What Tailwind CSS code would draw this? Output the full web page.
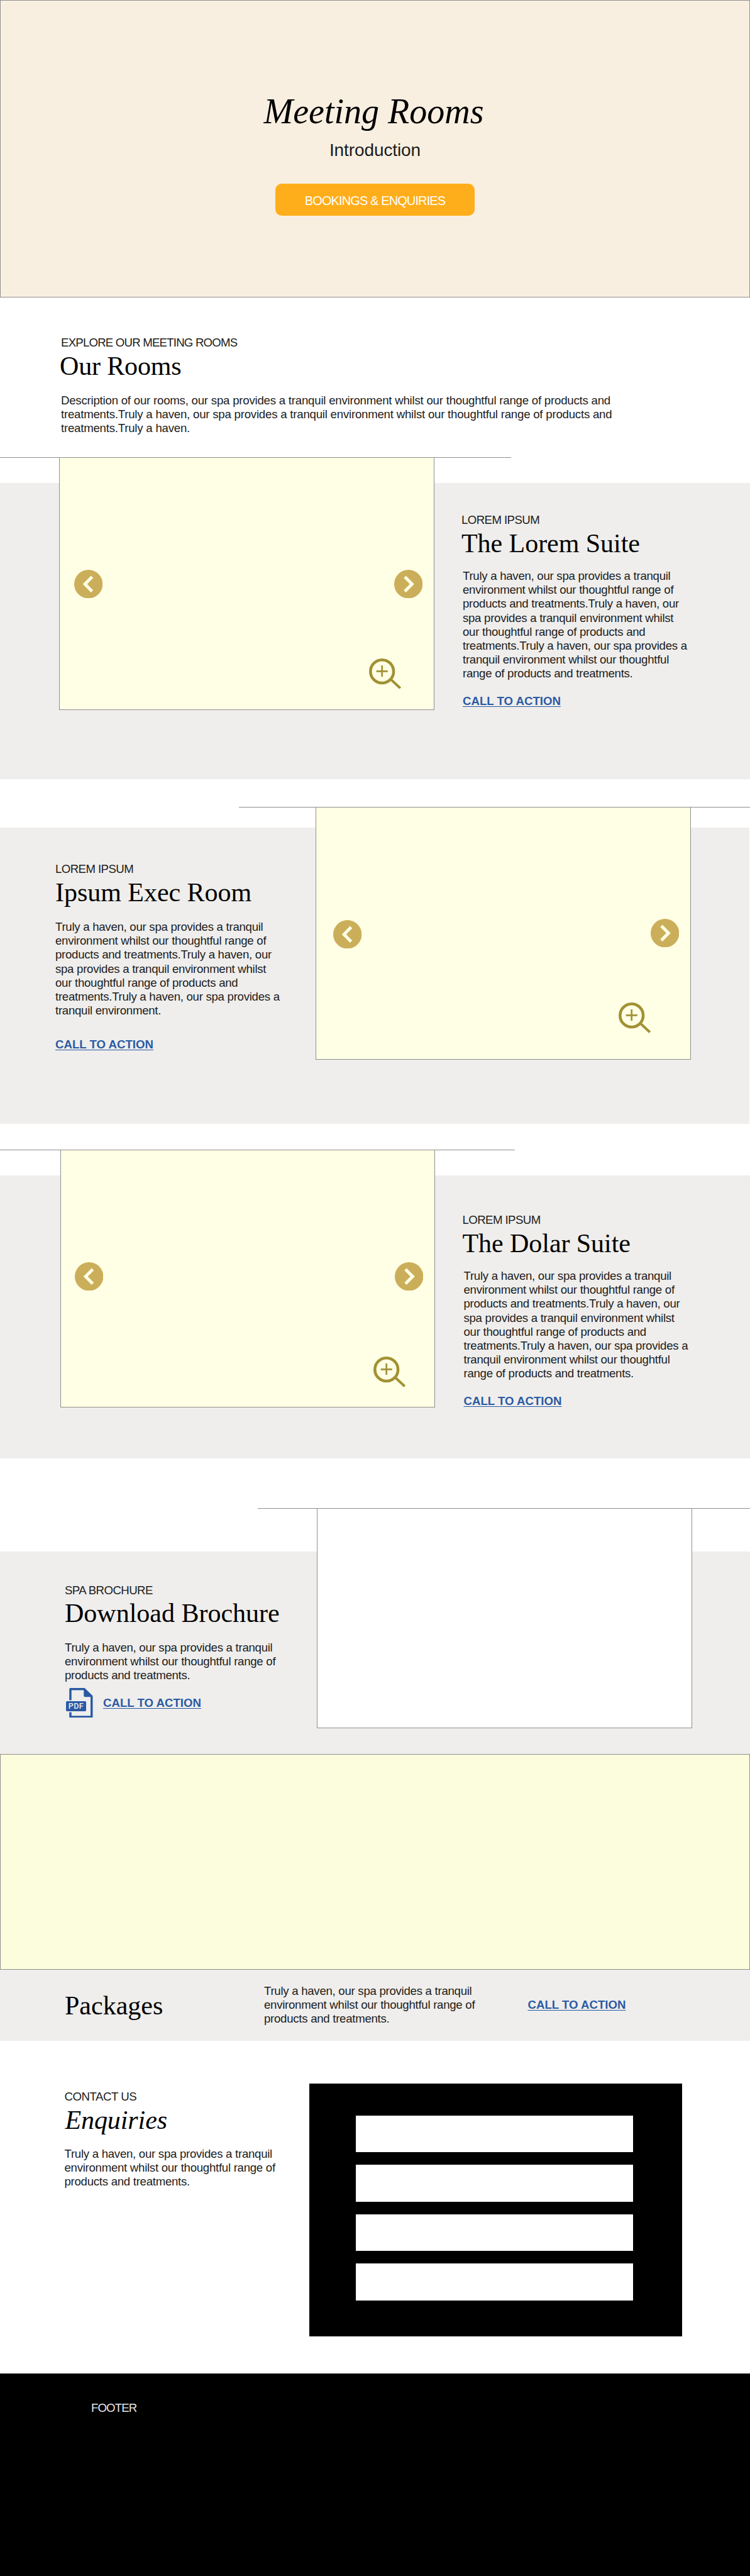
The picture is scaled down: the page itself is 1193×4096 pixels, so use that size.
<!DOCTYPE html>
<html lang="en">
<head>
<meta charset="utf-8">
<title>Meeting Rooms</title>
<script src="https://cdn.jsdelivr.net/npm/@tailwindcss/browser@4"></script>
</head>
<body class="bg-white text-[#1c1c1c] font-['Liberation_Sans',Arial,sans-serif] text-[18.64px] leading-[22.17px] whitespace-nowrap overflow-x-hidden">

<svg class="hidden">
  <symbol id="prev" viewBox="0 0 78 78">
    <circle cx="39" cy="39" r="39" fill="#cbae5a"/>
    <path d="M23.5 39 46 16.3 52 22.3 35.5 39 52 55.7 46 61.7Z" fill="#ffffe5"/>
  </symbol>
  <symbol id="next" viewBox="0 0 78 78">
    <circle cx="39" cy="39" r="39" fill="#cbae5a"/>
    <path d="M54.7 39 32.2 16.3 26.2 22.3 42.7 39 26.2 55.7 32.2 61.7Z" fill="#ffffe5"/>
  </symbol>
  <symbol id="zoom" viewBox="0 0 88 84">
    <circle cx="35.5" cy="35.5" r="31.6" fill="none" stroke="#a19133" stroke-width="7.8"/>
    <path d="M20 35H51M35.5 19V50" fill="none" stroke="#a19133" stroke-width="4.6"/>
    <path d="M59 61.5 64 56.5 87.7 78.7 83 83.7Z" fill="#a19133"/>
  </symbol>
</svg>

<header class="h-[473px] border border-[#8f8f8f] bg-[#f9efe0] pt-[146px] flex flex-col items-center">
  <h1 class="font-['Liberation_Serif',serif] italic text-black text-[56px] leading-[60px] -ml-1">Meeting Rooms</h1>
  <p class="mt-[18px] text-[28px] leading-7 tracking-[-0.1px]">Introduction</p>
  <a class="mt-[39px] w-[317px] h-[51px] pt-[3px] rounded-[10px] bg-[#ffae1b] text-white text-[20px] tracking-[-0.885px] flex items-center justify-center">BOOKINGS &amp; ENQUIRIES</a>
</header>

<section class="h-[254px] pt-[61px] pl-[97px]">
  <p class="leading-[22px] tracking-[-0.79px]">EXPLORE OUR MEETING ROOMS</p>
  <h2 class="mt-1 -ml-[2px] font-['Liberation_Serif',serif] text-black text-[42px] leading-[44px] tracking-[-0.15px]">Our Rooms</h2>
  <p class="mt-[22px] tracking-[-0.217px]">Description of our rooms, our spa provides a tranquil environment whilst our thoughtful range of products and<br>treatments.Truly a haven, our spa provides a tranquil environment whilst our thoughtful range of products and<br>treatments.Truly a haven.</p>
</section>

<!-- Room: The Lorem Suite -->
<div class="w-[813px] h-px bg-[#8f8f8f]"></div>
<section class="mt-10 h-[471px] bg-[#efeeec] flex items-start">
  <figure class="relative -mt-[41px] ml-[94px] w-[597px] h-[402px] shrink-0 border border-[#8f8f8f] bg-[#ffffe5]">
    <svg class="absolute left-[23px] top-[177.5px] size-[45.4px]"><use href="#prev"/></svg>
    <svg class="absolute left-[532px] top-[177.5px] size-[45.4px]"><use href="#next"/></svg>
    <svg class="absolute left-[492px] top-[318.5px] w-[51.3px] h-[48.9px]"><use href="#zoom"/></svg>
  </figure>
  <div class="ml-[43px] pt-12">
    <p class="leading-[22px] tracking-[-0.57px]">LOREM IPSUM</p>
    <h2 class="mt-1 font-['Liberation_Serif',serif] text-black text-[42px] leading-[44px] tracking-[-0.05px]">The Lorem Suite</h2>
    <p class="mt-[19px] ml-[2px] tracking-[-0.275px]">Truly a haven, our spa provides a tranquil<br>environment whilst our thoughtful range of<br>products and treatments.Truly a haven, our<br>spa provides a tranquil environment whilst<br>our thoughtful range of products and<br>treatments.Truly a haven, our spa provides a<br>tranquil environment whilst our thoughtful<br>range of products and treatments.</p>
    <a class="mt-[22px] ml-[2px] inline-block leading-[22px] font-bold text-[#2a5aa4] underline decoration-1 underline-offset-[1.5px] [text-decoration-skip-ink:none]">CALL TO ACTION</a>
  </div>
</section>

<!-- Room: Ipsum Exec Room -->
<div class="mt-11 ml-[380px] h-px bg-[#8f8f8f]"></div>
<section class="mt-8 h-[471px] w-[1192px] bg-[#efeeec] flex items-start">
  <div class="ml-[88px] w-[414px] pt-[55px]">
    <p class="leading-[22px] tracking-[-0.57px]">LOREM IPSUM</p>
    <h2 class="mt-1 font-['Liberation_Serif',serif] text-black text-[42px] leading-[44px] tracking-[-0.03px]">Ipsum Exec Room</h2>
    <p class="mt-[22px] tracking-[-0.275px]">Truly a haven, our spa provides a tranquil<br>environment whilst our thoughtful range of<br>products and treatments.Truly a haven, our<br>spa provides a tranquil environment whilst<br>our thoughtful range of products and<br>treatments.Truly a haven, our spa provides a<br>tranquil environment.</p>
    <a class="mt-8 inline-block leading-[22px] font-bold text-[#2a5aa4] underline decoration-1 underline-offset-[1.5px] [text-decoration-skip-ink:none]">CALL TO ACTION</a>
  </div>
  <figure class="relative -mt-[33px] w-[597px] h-[402px] shrink-0 border border-[#8f8f8f] bg-[#ffffe5]">
    <svg class="absolute left-[27.3px] top-[178.5px] size-[45.4px]"><use href="#prev"/></svg>
    <svg class="absolute left-[531.7px] top-[177px] size-[45.4px]"><use href="#next"/></svg>
    <svg class="absolute left-[480.7px] top-[310px] w-[51.3px] h-[48.9px]"><use href="#zoom"/></svg>
  </figure>
</section>

<!-- Room: The Dolar Suite -->
<div class="mt-[41px] w-[819px] h-px bg-[#8f8f8f]"></div>
<section class="mt-10 h-[450px] bg-[#efeeec] flex items-start">
  <figure class="relative -mt-[41px] ml-[96px] w-[596px] h-[410px] shrink-0 border border-[#8f8f8f] bg-[#ffffe5]">
    <svg class="absolute left-[22px] top-[178px] size-[45.4px]"><use href="#prev"/></svg>
    <svg class="absolute left-[531px] top-[178px] size-[45.4px]"><use href="#next"/></svg>
    <svg class="absolute left-[497.2px] top-[328px] w-[51.3px] h-[48.9px]"><use href="#zoom"/></svg>
  </figure>
  <div class="ml-[43.5px] pt-[60px]">
    <p class="leading-[22px] tracking-[-0.57px]">LOREM IPSUM</p>
    <h2 class="mt-1 font-['Liberation_Serif',serif] text-black text-[42px] leading-[44px] tracking-[-0.06px]">The Dolar Suite</h2>
    <p class="mt-[19px] ml-[2px] tracking-[-0.275px]">Truly a haven, our spa provides a tranquil<br>environment whilst our thoughtful range of<br>products and treatments.Truly a haven, our<br>spa provides a tranquil environment whilst<br>our thoughtful range of products and<br>treatments.Truly a haven, our spa provides a<br>tranquil environment whilst our thoughtful<br>range of products and treatments.</p>
    <a class="mt-[22px] ml-[2px] inline-block leading-[22px] font-bold text-[#2a5aa4] underline decoration-1 underline-offset-[1.5px] [text-decoration-skip-ink:none]">CALL TO ACTION</a>
  </div>
</section>

<!-- Brochure -->
<div class="mt-[79px] ml-[410px] h-px bg-[#8f8f8f]"></div>
<section class="mt-[68px] h-[322px] bg-[#efeeec] flex items-start">
  <div class="ml-[103px] w-[401px] pt-[51px]">
    <p class="leading-[22px] tracking-[-0.57px]">SPA BROCHURE</p>
    <h2 class="mt-[3px] font-['Liberation_Serif',serif] text-black text-[42px] leading-[44px]">Download Brochure</h2>
    <p class="mt-[22px] tracking-[-0.275px]">Truly a haven, our spa provides a tranquil<br>environment whilst our thoughtful range of<br>products and treatments.</p>
    <div class="mt-2 ml-[2px] flex items-start">
      <svg class="w-[42.5px] h-[47.8px]" viewBox="0 0 73 82" fill="#2a5aa4">
        <path d="M12 0H51L73 21.5V79Q73 82 70 82H12Q9 82 9 79V66H15V76H67V24.5H52Q48.5 24.5 48.5 21V6H15V33.5H9V3Q9 0 12 0Z"/>
        <rect y="36" width="55" height="27.5" rx="3"/>
        <text x="6.5" y="57.5" font-family="Roboto, sans-serif" font-size="21.5" font-weight="500" fill="#efeeec" textLength="41" lengthAdjust="spacing">PDF</text>
      </svg>
      <a class="mt-[13px] ml-[16.5px] leading-[22px] font-bold text-[#2a5aa4] underline decoration-1 underline-offset-[1.5px] [text-decoration-skip-ink:none]">CALL TO ACTION</a>
    </div>
  </div>
  <div class="-mt-[69px] w-[597px] h-[350px] shrink-0 border border-[#8f8f8f] bg-white"></div>
</section>

<div class="h-[343px] border border-[#8f8f8f] bg-[#fcfddd]"></div>

<!-- Packages -->
<section class="h-[113px] bg-[#efeeec] flex items-start">
  <h2 class="ml-[103px] w-[317px] pt-[35px] font-['Liberation_Serif',serif] text-black text-[42px] leading-[44px]">Packages</h2>
  <p class="w-[419.5px] pt-[23px] tracking-[-0.275px]">Truly a haven, our spa provides a tranquil<br>environment whilst our thoughtful range of<br>products and treatments.</p>
  <a class="mt-[45px] leading-[22px] font-bold text-[#2a5aa4] underline decoration-1 underline-offset-[1.5px] [text-decoration-skip-ink:none]">CALL TO ACTION</a>
</section>

<!-- Contact -->
<section class="h-[529px] flex items-start">
  <div class="ml-[102.5px] w-[389px] pt-[78px]">
    <p class="leading-[22px] tracking-[-0.47px]">CONTACT US</p>
    <h2 class="mt-1 ml-[1px] font-['Liberation_Serif',serif] italic text-black text-[42px] leading-[44px] tracking-[-0.1px]">Enquiries</h2>
    <p class="mt-[21px] tracking-[-0.275px]">Truly a haven, our spa provides a tranquil<br>environment whilst our thoughtful range of<br>products and treatments.</p>
  </div>
  <form class="mt-[68px] w-[593.5px] h-[402px] bg-black pt-[51px] pl-[74.5px] flex flex-col gap-[20.2px]">
    <div class="w-[440.5px] h-[58.3px] bg-white"></div>
    <div class="w-[440.5px] h-[58.3px] bg-white"></div>
    <div class="w-[440.5px] h-[58.3px] bg-white"></div>
    <div class="w-[440.5px] h-[58.3px] bg-white"></div>
  </form>
</section>

<footer class="h-[322px] bg-black pt-[44px] pl-[145px] text-[#e8e8e8]">
  <p class="leading-[22px] tracking-[-0.9px]">FOOTER</p>
</footer>
</body>
</html>
